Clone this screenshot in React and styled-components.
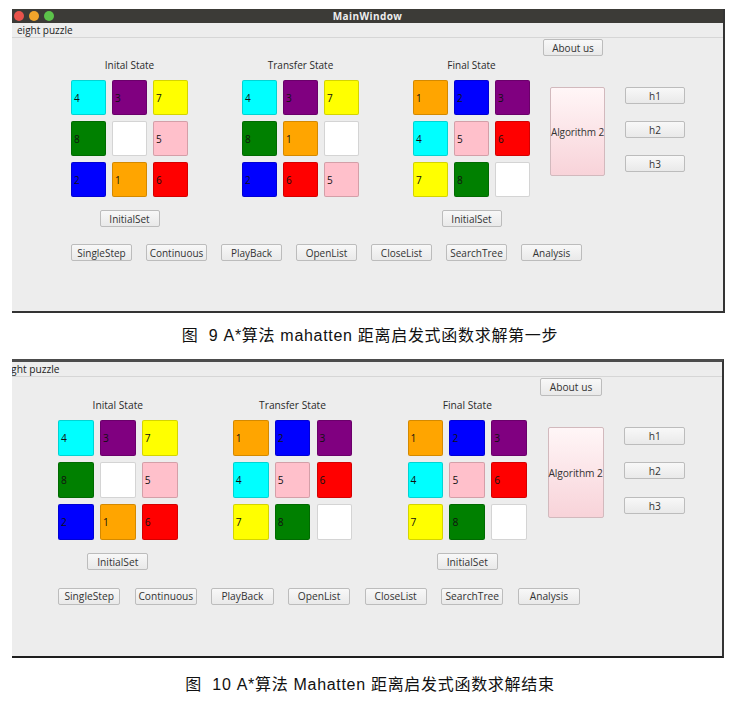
import React from "react";
import styled, { createGlobalStyle, css } from "styled-components";

const GlobalStyle = createGlobalStyle`
  html, body { margin: 0; padding: 0; background: #ffffff; }
  * { box-sizing: border-box; }
`;

const Page = styled.div`
  width: 740px;
  padding-top: 9px;
  font-family: "Open Sans", "Noto Sans", sans-serif;
`;

const Crop = styled.div`
  margin-left: 12px;
  width: 713px;
  overflow: hidden;
`;

const Window = styled.div`
  width: 713px;
  background: #ededed;
  border-right: 2px solid #343434;
  border-bottom: 2px solid #333333;
  ${(p) =>
    p.$cropped &&
    css`
      zoom: 1.022;
      width: 711px;
      margin-left: -14px;
      border-top: 3px solid #4c4c4c;
      border-bottom: 2px solid #1e1e1e;
    `}
`;

const TitleBar = styled.div`
  height: 14px;
  background: #3c3b37;
  display: grid;
  grid-template-columns: 1fr auto 1fr;
  align-items: center;
`;

const Lights = styled.div`
  display: flex;
  gap: 5px;
  padding-left: 2px;
`;

const Light = styled.span`
  width: 10px;
  height: 10px;
  border-radius: 50%;
  background: ${(p) => p.$c};
`;

const Title = styled.div`
  color: #eeeeee;
  font-size: 10px;
  font-weight: 700;
  letter-spacing: 0.4px;
  line-height: 14px;
`;

const MenuBar = styled.div`
  height: 15px;
  border-bottom: 1px solid #d6d6d6;
  padding-left: 5px;
  font-size: 10px;
  line-height: 14px;
  color: #222;
`;

const Body = styled.div`
  padding: 0 0 50px 59px;
  display: flex;
  flex-direction: column;
`;

const TopRow = styled.div`
  height: 18px;
  padding-top: 1px;
  padding-left: 472px;
  display: flex;
`;

const MainRow = styled.div`
  display: flex;
  align-items: flex-start;
`;

const StateColumn = styled.div`
  width: 117px;
  margin-right: 54px;
  display: flex;
  flex-direction: column;
  align-items: center;
  &:nth-child(3) {
    margin-right: 20px;
  }
`;

const Label = styled.div`
  margin-top: 2px;
  height: 14px;
  line-height: 14px;
  font-size: 10px;
  color: #2a2a2a;
`;

const Grid = styled.div`
  margin-top: 8px;
  display: grid;
  grid-template-columns: repeat(3, 35px);
  grid-auto-rows: 35px;
  gap: 6px;
`;

const tileColors = {
  0: "#ffffff",
  1: "#ffa500",
  2: "#0000ff",
  3: "#800080",
  4: "#00ffff",
  5: "#ffc0cb",
  6: "#ff0000",
  7: "#ffff00",
  8: "#008000",
};

const Tile = styled.div`
  background: ${(p) => tileColors[p.$n]};
  border: 1px solid rgba(0, 0, 0, 0.17);
  border-radius: 2px;
  display: flex;
  align-items: center;
  padding-left: 2px;
  font-size: 10px;
  color: #111;
`;

const Button = styled.div`
  width: ${(p) => p.$w || 60}px;
  height: 17px;
  border: 1px solid #bcbcbc;
  border-radius: 2px;
  background: linear-gradient(#f8f8f8, #e9e9e9);
  display: flex;
  align-items: center;
  justify-content: center;
  font-size: 10px;
  color: #333;
  white-space: nowrap;
  ${(p) => p.$mt && css`margin-top: ${p.$mt}px;`}
`;

const AlgoButton = styled.div`
  margin-top: 31px;
  margin-right: 20px;
  width: 55px;
  height: 89px;
  border: 1px solid #d2b9bd;
  border-radius: 2px;
  background: linear-gradient(#fff6f7, #f8d3d9);
  display: flex;
  align-items: center;
  justify-content: center;
  font-size: 10px;
  color: #333;
  white-space: nowrap;
  letter-spacing: -0.1px;
`;

const HColumn = styled.div`
  margin-top: 31px;
  display: flex;
  flex-direction: column;
  gap: 17px;
`;

const BottomRow = styled.div`
  margin-top: 17px;
  display: flex;
  gap: 14px;
`;

const Caption = styled.div`
  margin: ${(p) => p.$m};
  height: 20px;
  line-height: 20px;
  text-align: center;
  white-space: pre;
  font-family: "Liberation Sans", "Noto Sans CJK SC", sans-serif;
  font-size: 16px;
  letter-spacing: 0.7px;
  color: #111;
`;

function Board({ label, cells, withSet }) {
  return (
    <StateColumn>
      <Label>{label}</Label>
      <Grid>
        {cells.map((n, i) => (
          <Tile key={i} $n={n}>
            {n ? n : ""}
          </Tile>
        ))}
      </Grid>
      {withSet && <Button $mt={13}>InitialSet</Button>}
    </StateColumn>
  );
}

const bottomButtons = [
  "SingleStep",
  "Continuous",
  "PlayBack",
  "OpenList",
  "CloseList",
  "SearchTree",
  "Analysis",
];

function PuzzleWindow({ cropped, transfer }) {
  const initial = [4, 3, 7, 8, 0, 5, 2, 1, 6];
  const final = [1, 2, 3, 4, 5, 6, 7, 8, 0];
  return (
    <Window $cropped={cropped}>
      {!cropped && (
        <TitleBar>
          <Lights>
            <Light $c="#e9534b" />
            <Light $c="#f1a52b" />
            <Light $c="#5cc34a" />
          </Lights>
          <Title>MainWindow</Title>
          <span />
        </TitleBar>
      )}
      <MenuBar>eight puzzle</MenuBar>
      <Body>
        <TopRow>
          <Button>About us</Button>
        </TopRow>
        <MainRow>
          <Board label="Inital State" cells={initial} withSet />
          <Board label="Transfer State" cells={transfer} />
          <Board label="Final State" cells={final} withSet />
          <AlgoButton>Algorithm 2</AlgoButton>
          <HColumn>
            <Button>h1</Button>
            <Button>h2</Button>
            <Button>h3</Button>
          </HColumn>
        </MainRow>
        <BottomRow>
          {bottomButtons.map((b) => (
            <Button key={b} $w={61}>
              {b}
            </Button>
          ))}
        </BottomRow>
      </Body>
    </Window>
  );
}

export default function App() {
  return (
    <>
      <GlobalStyle />
      <Page>
        <Crop>
          <PuzzleWindow transfer={[4, 3, 7, 8, 1, 0, 2, 6, 5]} />
        </Crop>
        <Caption $m="13px 0 13px 0">{"图  9 A*算法 mahatten 距离启发式函数求解第一步"}</Caption>
        <Crop>
          <PuzzleWindow cropped transfer={[1, 2, 3, 4, 5, 6, 7, 8, 0]} />
        </Crop>
        <Caption $m="17px 0 0 0">{"图  10 A*算法 Mahatten 距离启发式函数求解结束"}</Caption>
      </Page>
    </>
  );
}
